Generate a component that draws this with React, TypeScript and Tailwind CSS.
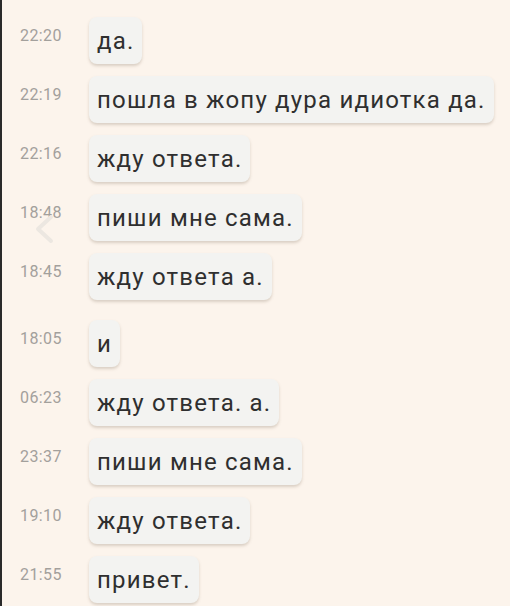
import React from 'react';

type Msg = { time: string; text: string; extra?: boolean };

const messages: Msg[] = [
  { time: '22:20', text: 'да.' },
  { time: '22:19', text: 'пошла в жопу дура идиотка да.' },
  { time: '22:16', text: 'жду ответа.' },
  { time: '18:48', text: 'пиши мне сама.' },
  { time: '18:45', text: 'жду ответа а.' },
  { time: '18:05', text: 'и', extra: true },
  { time: '06:23', text: 'жду ответа. а.' },
  { time: '23:37', text: 'пиши мне сама.' },
  { time: '19:10', text: 'жду ответа.' },
  { time: '21:55', text: 'привет.' },
];

const App = () => {
  return (
    <div
      className="relative w-[510px] h-[606px] overflow-hidden bg-[#fcf4ec] border-l-2 border-[#2a2a2a]"
      style={{ fontFamily: 'Roboto, "Noto Sans", sans-serif' }}
    >
      <div className="flex flex-col gap-3 pt-[17px]">
        {messages.map((m, i) => (
          <div key={i} className={`flex items-start ${m.extra ? 'mt-2' : ''}`}>
            <div className="w-[87px] shrink-0 pl-[18px] pt-[10px] text-[16px] leading-[18px] tracking-[0.4px] text-[#a3a09c]">
              {m.time}
            </div>
            <div className="rounded-lg bg-[#f3f3f1] px-2 pt-[9px] pb-2 text-[24px] leading-[30px] tracking-[1.2px] text-[#2f2f2f] shadow-[0_2px_3px_rgba(120,100,80,0.25)]">
              {m.text}
            </div>
          </div>
        ))}
      </div>
      <svg
        className="absolute left-[31px] top-[214px]"
        width="22"
        height="30"
        viewBox="0 0 22 30"
        fill="none"
      >
        <path d="M18 3 L5 15 L18 27" stroke="#ece7e1" strokeWidth="4" strokeLinecap="round" strokeLinejoin="round" />
      </svg>
    </div>
  );
};

export default App;
